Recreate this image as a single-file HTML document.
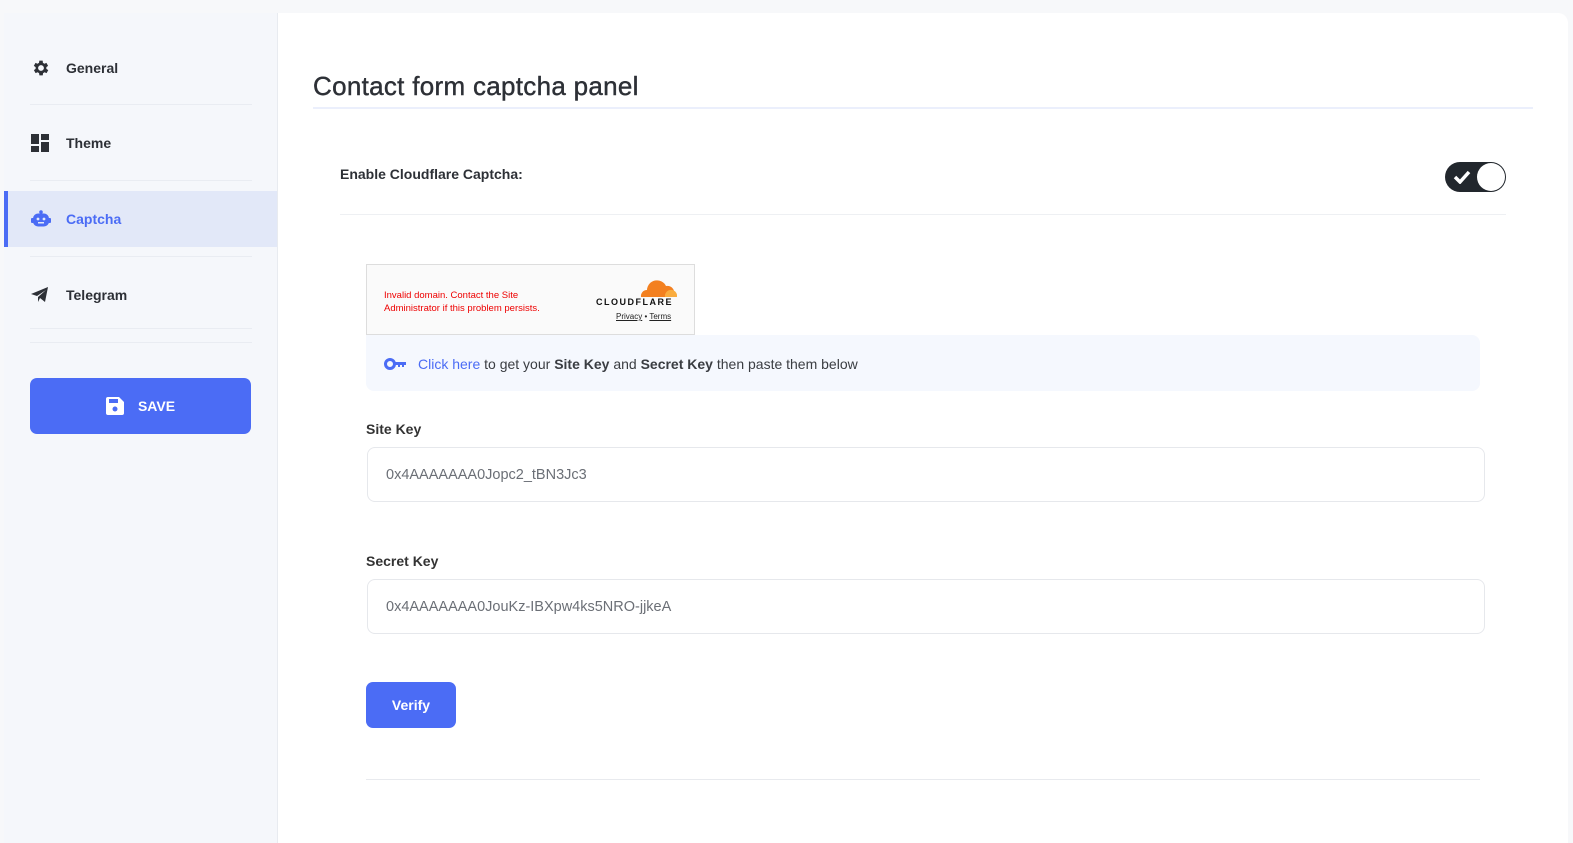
<!DOCTYPE html>
<html><head><meta charset="utf-8"><style>
*{box-sizing:border-box;margin:0;padding:0}
body{width:1573px;height:830px;background:#f7f8fa;font-family:"Liberation Sans",sans-serif;color:#2d3036;position:relative;overflow:hidden}
.wrap{position:absolute;left:4px;top:13px;width:1564px;height:830px;background:#fff;border-top-right-radius:10px}
.side{position:absolute;left:0;top:0;width:274px;height:830px;background:#f5f7fb;border-right:1px solid #e8ebf0}
.item{position:absolute;left:0;width:273px;height:56px;display:flex;align-items:center;font-size:14px;font-weight:bold;color:#2d3036}
.item svg{position:absolute;left:27px}
.item span{position:absolute;left:62px}
.sep{position:absolute;left:26px;width:222px;height:1px;background:#e9ecf2}
.act{background:#e2e8f8;color:#4b6cf5;border-left:4px solid #4b6cf5}
.save{position:absolute;left:26px;top:365px;width:221px;height:56px;background:#4b6cf5;border-radius:7px;color:#fff;font-weight:bold;font-size:14px;display:flex;align-items:center;justify-content:center;gap:14px}
.abs{position:absolute}
h1{position:absolute;left:309px;top:58px;font-size:26px;font-weight:normal;color:#2d3036;letter-spacing:.3px;-webkit-text-stroke:.4px #2d3036}
.inp{position:absolute;left:363px;width:1118px;height:55px;border:1px solid #e6e8ec;border-radius:8px;font-size:14.5px;color:#6b6f76;padding:19px 18px}
</style></head><body>
<div class="wrap">
<div class="side">
 <div class="item" style="top:27px"><svg width="20" height="20" viewBox="0 0 24 24"><path fill="#2d3036" d="M19.4 13a7.5 7.5 0 000-2l2.1-1.6-2-3.5-2.5 1a7 7 0 00-1.7-1L15 3.2h-4l-.4 2.7a7 7 0 00-1.7 1l-2.5-1-2 3.5L6.6 11a7.5 7.5 0 000 2l-2.1 1.6 2 3.5 2.5-1a7 7 0 001.7 1l.4 2.7h4l.4-2.7a7 7 0 001.7-1l2.5 1 2-3.5zM13 15.5a3.5 3.5 0 110-7 3.5 3.5 0 010 7z" transform="translate(-1 0)"/></svg><span>General</span></div>
 <div class="sep" style="top:91px"></div>
 <div class="item" style="top:102px"><svg width="18" height="18" viewBox="0 0 18 18"><rect x="0" y="0" width="8" height="10" fill="#2d3036"/><rect x="10" y="0" width="8" height="6" fill="#2d3036"/><rect x="0" y="12" width="8" height="6" fill="#2d3036"/><rect x="10" y="8" width="8" height="10" fill="#2d3036"/></svg><span>Theme</span></div>
 <div class="sep" style="top:167px"></div>
 <div class="item act" style="top:178px"><svg width="20" height="18" viewBox="0 0 20 18" style="left:23px"><circle cx="10" cy="2" r="1.8" fill="#4b6cf5"/><rect x="2" y="3.5" width="16" height="13" rx="5" fill="#4b6cf5"/><rect x="0" y="8" width="3" height="5" rx="1" fill="#4b6cf5"/><rect x="17" y="8" width="3" height="5" rx="1" fill="#4b6cf5"/><circle cx="7" cy="9" r="1.4" fill="#e2e8f8"/><circle cx="13" cy="9" r="1.4" fill="#e2e8f8"/><rect x="7" y="12" width="6" height="1.5" fill="#e2e8f8"/></svg><span style="left:58px">Captcha</span></div>
 <div class="sep" style="top:243px"></div>
 <div class="item" style="top:254px"><svg width="18" height="16" viewBox="0 0 18 16"><path fill="#2d3036" d="M0 7L17 0l-3 15-5-4-2 4V10l8-7-9 6z"/></svg><span>Telegram</span></div>
 <div class="sep" style="top:315px"></div>
 <div class="sep" style="top:329px"></div>
 <div class="save"><svg width="18" height="18" viewBox="0 0 18 18"><path fill="#fff" d="M2 0h11l5 5v11a2 2 0 01-2 2H2a2 2 0 01-2-2V2a2 2 0 012-2z"/><rect x="3" y="2" width="9" height="4" fill="#4b6cf5"/><circle cx="9" cy="12" r="2.5" fill="#4b6cf5"/></svg>SAVE</div>
</div>
<h1>Contact form captcha panel</h1>
<div class="abs" style="left:309px;top:94px;width:1220px;height:2px;background:#ebeffc"></div>
<div class="abs" style="left:336px;top:153px;font-size:14px;font-weight:bold">Enable Cloudflare Captcha:</div>
<div class="abs" style="left:1441px;top:149px;width:61px;height:30px;border-radius:15px;background:#22272d"><svg class="abs" style="left:8px;top:8px" width="18" height="14" viewBox="0 0 18 14"><path d="M2 7l5 5L16 2" stroke="#fff" stroke-width="3.5" fill="none"/></svg><div class="abs" style="left:32px;top:1px;width:28px;height:28px;border-radius:50%;background:#fff"></div></div>
<div class="abs" style="left:336px;top:201px;width:1166px;height:1px;background:#eef0f3"></div>
<div class="abs" style="left:362px;top:251px;width:329px;height:71px;background:#fafafa;border:1px solid #ddd">
 <div class="abs" style="left:17px;top:24px;font-size:9.5px;line-height:13px;color:#e00">Invalid domain. Contact the Site<br>Administrator if this problem persists.</div>
 <svg class="abs" style="left:270px;top:12px" width="42" height="20" viewBox="0 0 42 20"><path fill="#f38020" d="M4 20a6 6 0 016-7 10 10 0 0119-4 7 7 0 017 11z"/><path fill="#faad3f" d="M28 20a6 6 0 0112-2v2z"/></svg>
 <div class="abs" style="left:229px;top:32px;font-size:9px;font-weight:bold;letter-spacing:1.5px;color:#111">CLOUDFLARE</div>
 <div class="abs" style="left:249px;top:47px;font-size:8px;color:#222"><u>Privacy</u> • <u>Terms</u></div>
</div>
<div class="abs" style="left:362px;top:322px;width:1114px;height:56px;background:#f5f8fe;border-radius:0 8px 8px 8px;font-size:14px;padding:21px 0 0 52px;color:#3a3d42">
 <svg class="abs" style="left:18px;top:23px" width="22" height="12" viewBox="0 0 22 12"><circle cx="6" cy="6" r="4.5" fill="none" stroke="#4b6cf5" stroke-width="3"/><path fill="#4b6cf5" d="M10 4h12v3h-2v2h-2V7h-2v2h-2V7h-4z"/></svg>
 <span style="color:#4b6cf5">Click here</span> to get your <b>Site Key</b> and <b>Secret Key</b> then paste them below</div>
<div class="abs" style="left:362px;top:408px;font-size:14px;font-weight:bold;color:#333">Site Key</div>
<div class="inp" style="top:434px">0x4AAAAAAA0Jopc2_tBN3Jc3</div>
<div class="abs" style="left:362px;top:540px;font-size:14px;font-weight:bold;color:#333">Secret Key</div>
<div class="inp" style="top:566px">0x4AAAAAAA0JouKz-IBXpw4ks5NRO-jjkeA</div>
<div class="abs" style="left:362px;top:669px;width:90px;height:46px;background:#4b6cf5;border-radius:7px;color:#fff;font-weight:bold;font-size:14px;text-align:center;line-height:46px">Verify</div>
<div class="abs" style="left:362px;top:766px;width:1114px;height:1px;background:#e8eaee"></div>
</div>
</body></html>
